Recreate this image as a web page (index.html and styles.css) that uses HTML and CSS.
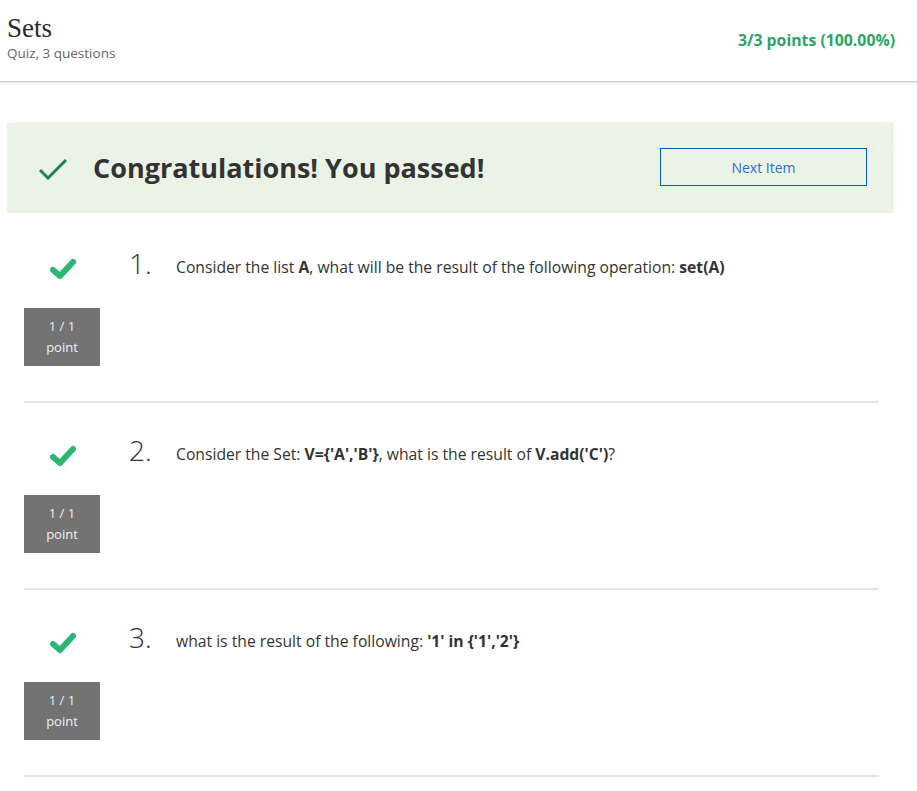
FILE: index.html
```html
<!DOCTYPE html>
<html>
<head>
<meta charset="utf-8">
<link rel="stylesheet" href="styles.css">
</head>
<body>
<header class="header">
  <div class="title-block">
    <h1 class="title">Sets</h1>
    <div class="subtitle">Quiz, 3 questions</div>
  </div>
  <div class="score">3/3 points (100.00%)</div>
</header>
<main class="main">
  <section class="banner">
    <div class="banner-left">
      <svg class="banner-check" viewBox="0 0 30 22" width="30" height="22"><path d="M2 12 L10 20 L28 2" fill="none" stroke="#1f8354" stroke-width="3"/></svg>
      <h2 class="banner-text">Congratulations! You passed!</h2>
    </div>
    <button class="next-btn">Next Item</button>
  </section>
  <section class="questions">
    <div class="q-row q-first">
      <div class="q-side">
        <svg class="q-check" viewBox="0 0 28 22" width="28" height="22"><path d="M4 12 L11 18 L24 4" fill="none" stroke="#2bb673" stroke-width="6" stroke-linecap="round" stroke-linejoin="round"/></svg>
        <div class="badge"><span>1 / 1</span><span>point</span></div>
      </div>
      <div class="q-num">1.</div>
      <div class="q-text">Consider the list <b>A</b>, what will be the result of the following operation: <b>set(A)</b></div>
    </div>
    <div class="q-row">
      <div class="q-side">
        <svg class="q-check" viewBox="0 0 28 22" width="28" height="22"><path d="M4 12 L11 18 L24 4" fill="none" stroke="#2bb673" stroke-width="6" stroke-linecap="round" stroke-linejoin="round"/></svg>
        <div class="badge"><span>1 / 1</span><span>point</span></div>
      </div>
      <div class="q-num">2.</div>
      <div class="q-text">Consider the Set: <b>V={'A','B'}</b>, what is the result of <b>V.add('C')</b>?</div>
    </div>
    <div class="q-row">
      <div class="q-side">
        <svg class="q-check" viewBox="0 0 28 22" width="28" height="22"><path d="M4 12 L11 18 L24 4" fill="none" stroke="#2bb673" stroke-width="6" stroke-linecap="round" stroke-linejoin="round"/></svg>
        <div class="badge"><span>1 / 1</span><span>point</span></div>
      </div>
      <div class="q-num">3.</div>
      <div class="q-text">what is the result of the following: <b>'1' in {'1','2'}</b></div>
    </div>
  </section>
</main>
</body>
</html>
```
FILE: styles.css
```css
* { box-sizing: border-box; }
html, body { margin: 0; padding: 0; background: #fff; }
body {
  font-family: "Open Sans", "Noto Sans", sans-serif;
  color: #333;
  width: 917px;
}
.header {
  height: 82px;
  display: flex;
  justify-content: space-between;
  align-items: flex-start;
  padding: 0 22px 0 7px;
  border-bottom: 1px solid #cfcfcf;
  box-shadow: 0 1px 2px rgba(0,0,0,0.12);
}
.title {
  margin: 13px 0 0 0;
  font-family: "Liberation Serif", "DejaVu Serif", serif;
  font-weight: 400;
  font-size: 27px;
  line-height: 30px;
  color: #2a2a2a;
}
.subtitle {
  font-size: 13.5px;
  line-height: 18px;
  color: #666;
  margin-top: 1px;
}
.score {
  margin-top: 29px;
  font-size: 15.8px;
  font-weight: 700;
  color: #2ca468;
}
.main { padding: 40px 23px 0 7px; }
.banner {
  height: 91px;
  background: #ebf3e6;
  display: flex;
  align-items: center;
  justify-content: space-between;
  padding: 0 27px 0 31px;
}
.banner-left { display: flex; align-items: center; }
.banner-check { display: block; margin-right: 25px; margin-top: 2px; }
.banner-text {
  margin: 0;
  font-size: 27px;
  font-weight: 700;
  color: #333;
}
.next-btn {
  width: 207px;
  height: 38px;
  background: transparent;
  border: 1.5px solid #0056d2;
  font-family: "Open Sans", sans-serif;
  font-size: 14px;
  color: #2a6fcf;
  margin-top: -1px;
}
.questions { padding: 3px 15px 0 17px; }
.q-row {
  height: 187px;
  border-bottom: 2px solid #e3e3e3;
  display: flex;
  align-items: flex-start;
}
.q-side {
  width: 76px;
  display: flex;
  flex-direction: column;
  align-items: center;
  padding-top: 42px;
}
.q-check { display: block; margin-left: 1px; }
.badge {
  margin-top: 28px;
  width: 76px;
  height: 58px;
  background: #737373;
  color: #eef0f0;
  font-size: 13px;
  line-height: 21px;
  display: flex;
  flex-direction: column;
  align-items: center;
  justify-content: center;
}
.q-num {
  margin-left: 29px;
  margin-top: 31px;
  width: 47px;
  font-size: 28px;
  font-weight: 300;
  line-height: 32px;
  color: #333;
}
.q-text {
  margin-top: 40px;
  font-size: 15.7px;
  line-height: 22px;
  color: #333;
}
.q-text b { font-weight: 700; }
```
